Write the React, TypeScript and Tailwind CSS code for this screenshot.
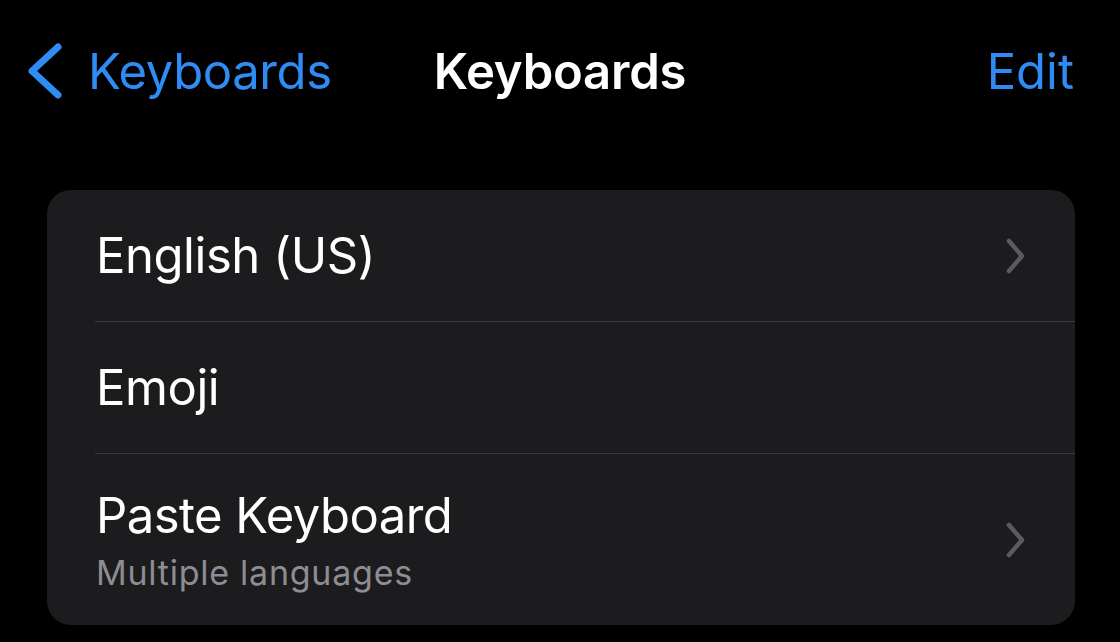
import React from "react";

const Chevron = () => (
  <svg width="24" height="40" viewBox="0 0 24 40" className="shrink-0">
    <path d="M6 5 L19 20 L6 35" fill="none" stroke="#5b5b5f" strokeWidth="4.5" strokeLinecap="round" strokeLinejoin="round" />
  </svg>
);

export default function App() {
  return (
    <div className="w-[1120px] h-[642px] bg-black overflow-hidden" style={{ fontFamily: "Inter, 'Noto Sans', sans-serif" }}>
      <div className="relative flex items-center h-[142px] pl-[24px] pr-[26px]">
        <div className="flex items-center gap-[24px] text-[#2f8cf5]">
          <svg width="40" height="60" viewBox="0 0 40 60">
            <path d="M34 6 L8 30 L34 54" fill="none" stroke="#2f8cf5" strokeWidth="7" strokeLinecap="round" strokeLinejoin="round" />
          </svg>
          <span className="text-[49px] leading-none tracking-[-0.4px]">Keyboards</span>
        </div>
        <div className="absolute left-0 right-0 text-center pointer-events-none">
          <span className="text-[49px] font-semibold leading-none text-white tracking-[-0.2px]">Keyboards</span>
        </div>
        <div className="ml-auto text-[49px] leading-none text-[#2f8cf5] mr-[20px]">Edit</div>
      </div>
      <div className="mt-[48px] ml-[47px] mr-[45px] bg-[#1c1c1e] rounded-[24px] overflow-hidden">
        <div className="flex items-center h-[131px] pl-[49px] pr-[48px] text-white">
          <span className="text-[49px] leading-none tracking-[-0.45px]">English (US)</span>
          <span className="ml-auto"><Chevron /></span>
        </div>
        <div className="ml-[48px] h-px bg-[#3a3a3c]" />
        <div className="flex items-center h-[131px] pl-[49px] pr-[48px] text-white">
          <span className="text-[49px] leading-none tracking-[-0.45px]">Emoji</span>
        </div>
        <div className="ml-[48px] h-px bg-[#3a3a3c]" />
        <div className="flex items-center h-[171px] pl-[49px] pr-[48px]">
          <div className="flex flex-col gap-[16px] pt-[2px]">
            <span className="text-[49px] leading-none text-white tracking-[-0.55px]">Paste Keyboard</span>
            <span className="text-[34px] leading-none text-[#8d8d93] tracking-[0.75px]">Multiple languages</span>
          </div>
          <span className="ml-auto"><Chevron /></span>
        </div>
      </div>
    </div>
  );
}
